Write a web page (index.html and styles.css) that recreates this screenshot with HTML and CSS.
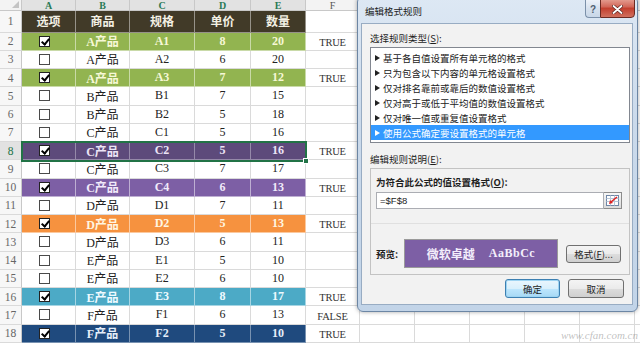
FILE: index.html
```html
<!DOCTYPE html>
<html lang="zh-CN">
<head>
<meta charset="utf-8">
<title>编辑格式规则</title>
<link rel="stylesheet" href="styles.css">
</head>
<body>
<div class="screen">
  <div class="sheet">
    <div class="row head">
      <div class="corner"></div>
      <div class="colh sel">A</div>
      <div class="colh sel">B</div>
      <div class="colh sel">C</div>
      <div class="colh sel">D</div>
      <div class="colh sel">E</div>
      <div class="colh">F</div>
      <div class="colh rest"></div>
    </div>
    <div class="row hdr">
      <div class="rh">1</div>
      <div class="c">选项</div><div class="c">商品</div><div class="c">规格</div><div class="c">单价</div><div class="c">数量</div>
      <div class="f"></div><div class="r"></div>
    </div>
    <div class="row g">
      <div class="rh">2</div>
      <div class="c a"><span class="cb on"></span></div><div class="c">A产品</div><div class="c">A1</div><div class="c">8</div><div class="c">20</div>
      <div class="f">TRUE</div><div class="r"></div>
    </div>
    <div class="row">
      <div class="rh">3</div>
      <div class="c a"><span class="cb"></span></div><div class="c">A产品</div><div class="c">A2</div><div class="c">6</div><div class="c">20</div>
      <div class="f"></div><div class="r"></div>
    </div>
    <div class="row g">
      <div class="rh">4</div>
      <div class="c a"><span class="cb on"></span></div><div class="c">A产品</div><div class="c">A3</div><div class="c">7</div><div class="c">12</div>
      <div class="f">TRUE</div><div class="r"></div>
    </div>
    <div class="row">
      <div class="rh">5</div>
      <div class="c a"><span class="cb"></span></div><div class="c">B产品</div><div class="c">B1</div><div class="c">7</div><div class="c">15</div>
      <div class="f"></div><div class="r"></div>
    </div>
    <div class="row">
      <div class="rh">6</div>
      <div class="c a"><span class="cb"></span></div><div class="c">B产品</div><div class="c">B2</div><div class="c">5</div><div class="c">18</div>
      <div class="f"></div><div class="r"></div>
    </div>
    <div class="row">
      <div class="rh">7</div>
      <div class="c a"><span class="cb"></span></div><div class="c">C产品</div><div class="c">C1</div><div class="c">5</div><div class="c">16</div>
      <div class="f"></div><div class="r"></div>
    </div>
    <div class="row pd">
      <div class="rh sel">8</div>
      <div class="c a"><span class="cb on"></span></div><div class="c">C产品</div><div class="c">C2</div><div class="c">5</div><div class="c">16</div>
      <div class="f">TRUE</div><div class="r"></div>
    </div>
    <div class="row">
      <div class="rh">9</div>
      <div class="c a"><span class="cb"></span></div><div class="c">C产品</div><div class="c">C3</div><div class="c">7</div><div class="c">17</div>
      <div class="f"></div><div class="r"></div>
    </div>
    <div class="row p">
      <div class="rh">10</div>
      <div class="c a"><span class="cb on"></span></div><div class="c">C产品</div><div class="c">C4</div><div class="c">6</div><div class="c">13</div>
      <div class="f">TRUE</div><div class="r"></div>
    </div>
    <div class="row">
      <div class="rh">11</div>
      <div class="c a"><span class="cb"></span></div><div class="c">D产品</div><div class="c">D1</div><div class="c">7</div><div class="c">11</div>
      <div class="f"></div><div class="r"></div>
    </div>
    <div class="row o">
      <div class="rh">12</div>
      <div class="c a"><span class="cb on"></span></div><div class="c">D产品</div><div class="c">D2</div><div class="c">5</div><div class="c">13</div>
      <div class="f">TRUE</div><div class="r"></div>
    </div>
    <div class="row">
      <div class="rh">13</div>
      <div class="c a"><span class="cb"></span></div><div class="c">D产品</div><div class="c">D3</div><div class="c">6</div><div class="c">11</div>
      <div class="f"></div><div class="r"></div>
    </div>
    <div class="row">
      <div class="rh">14</div>
      <div class="c a"><span class="cb"></span></div><div class="c">E产品</div><div class="c">E1</div><div class="c">5</div><div class="c">10</div>
      <div class="f"></div><div class="r"></div>
    </div>
    <div class="row">
      <div class="rh">15</div>
      <div class="c a"><span class="cb"></span></div><div class="c">E产品</div><div class="c">E2</div><div class="c">6</div><div class="c">10</div>
      <div class="f"></div><div class="r"></div>
    </div>
    <div class="row t">
      <div class="rh">16</div>
      <div class="c a"><span class="cb on"></span></div><div class="c">E产品</div><div class="c">E3</div><div class="c">8</div><div class="c">17</div>
      <div class="f">TRUE</div><div class="r"></div>
    </div>
    <div class="row">
      <div class="rh">17</div>
      <div class="c a"><span class="cb"></span></div><div class="c">F产品</div><div class="c">F1</div><div class="c">6</div><div class="c">13</div>
      <div class="f">FALSE</div><div class="r"></div>
    </div>
    <div class="row b">
      <div class="rh">18</div>
      <div class="c a"><span class="cb on"></span></div><div class="c">F产品</div><div class="c">F2</div><div class="c">5</div><div class="c">10</div>
      <div class="f">TRUE</div><div class="r"></div>
    </div>
  </div>

  <div class="selbox"></div>
  <div class="handle"></div>

  <div class="dialog">
    <div class="titlebar">
      <span class="title">编辑格式规则</span>
      <div class="caps">
        <span class="cap help">?</span>
        <span class="cap close"><svg width="11" height="9" viewBox="0 0 11 9"><path d="M1.5 1 L9.5 8 M9.5 1 L1.5 8" stroke="#5a2420" stroke-width="3.2" stroke-linecap="round"/><path d="M1.5 1 L9.5 8 M9.5 1 L1.5 8" stroke="#fff" stroke-width="1.8" stroke-linecap="round"/></svg></span>
      </div>
    </div>
    <div class="client">
      <div class="lbl">选择规则类型(<u>S</u>):</div>
      <ul class="list">
        <li><span class="tri"></span>基于各自值设置所有单元格的格式</li>
        <li><span class="tri"></span>只为包含以下内容的单元格设置格式</li>
        <li><span class="tri"></span>仅对排名靠前或靠后的数值设置格式</li>
        <li><span class="tri"></span>仅对高于或低于平均值的数值设置格式</li>
        <li><span class="tri"></span>仅对唯一值或重复值设置格式</li>
        <li class="on"><span class="tri"></span>使用公式确定要设置格式的单元格</li>
      </ul>
      <div class="lbl lbl2">编辑规则说明(<u>E</u>):</div>
      <div class="group">
        <div class="lbl bold">为符合此公式的值设置格式(<u>O</u>):</div>
        <div class="inrow">
          <div class="input">=$F$8</div>
          <span class="refbtn"><svg width="13" height="11" viewBox="0 0 13 11"><rect x="0.5" y="0.5" width="12" height="10" fill="#fff" stroke="#6f86a6"/><path d="M0.5 3.5 H12.5 M0.5 6.5 H12.5 M4.5 0.5 V10.5 M8.5 0.5 V10.5" stroke="#b9c7d9" stroke-width="1"/><path d="M11 2 L5 7" stroke="#d22" stroke-width="1.6"/><path d="M3 9 L4 5 L7 8 Z" fill="#d22"/></svg></span>
        </div>
        <div class="sep"></div>
        <div class="prevrow">
          <span class="lbl bold plbl">预览:</span>
          <div class="preview"><span>微软卓越</span><span class="lat">AaBbCc</span></div>
          <span class="btn fmt">格式(<u>F</u>)...</span>
        </div>
      </div>
      <div class="actions">
        <span class="btn def">确定</span>
        <span class="btn">取消</span>
      </div>
    </div>
  </div>

  <div class="watermark">www.cfan.com.cn</div>
</div>
</body>
</html>
```

FILE: styles.css
```css
* { box-sizing: border-box; margin: 0; padding: 0; }
html, body { width: 640px; height: 343px; overflow: hidden; background: #fff; }
body { font-family: "Liberation Serif", "Noto Sans CJK SC", serif; }

.screen { position: relative; width: 640px; height: 343px; overflow: hidden; }

/* ---------- spreadsheet ---------- */
.sheet {
  display: grid;
  grid-template-columns: 22px 54px 54px 65px 56px 55px 54px 1fr;
  grid-template-rows: 11px 21.5px repeat(17, 18.25px);
  font-size: 12px;
  color: #222;
}
.row { display: contents; }
.row > div {
  display: flex;
  align-items: center;
  justify-content: center;
  border-right: 1px solid #dadada;
  border-bottom: 1px solid #dadada;
  white-space: nowrap;
  overflow: hidden;
}

.corner { background: #f3f3f3; position: relative; border-color: #c8c8c8 !important; }
.corner::after {
  content: "";
  position: absolute;
  right: 2px; bottom: 2px;
  border-left: 7px solid transparent;
  border-bottom: 7px solid #c4c4c4;
}
.colh {
  background: #f3f3f3;
  font-family: "Liberation Serif", serif;
  font-size: 10px;
  color: #555;
  border-color: #c8c8c8 !important;
}
.colh.sel { background: #e2e2e2; color: #2a7a56; font-weight: bold; }
.colh.rest { background: #f3f3f3 repeating-linear-gradient(to right, transparent 0 54px, #c8c8c8 54px 55px); border-right: 0 !important; }

.rh {
  background: #f7f7f7;
  font-family: "Liberation Serif", serif;
  font-size: 11.5px;
  color: #666;
  border-right-color: #c8c8c8 !important;
}
.rh.sel { background: #e2e2e2; color: #217346; }

.c.a { justify-content: flex-start; padding-left: 17px; }
.f {
  align-items: flex-end !important;
  padding-bottom: 2px;
  font-size: 10.5px;
  letter-spacing: -0.2px;
  color: #333;
}
.r {
  border-right: 0 !important;
  background: repeating-linear-gradient(to right, transparent 0 54px, #dadada 54px 55px);
}

/* checkbox */
.cb {
  position: relative;
  width: 11px; height: 11px;
  background: #fff;
  border: 1px solid #4a4a4a;
  display: block;
}
.cb.on { border-color: #222; }
.cb.on::after {
  content: "";
  position: absolute;
  left: 3px; top: 0px;
  width: 3px; height: 6px;
  border-right: 2px solid #000;
  border-bottom: 2px solid #000;
  transform: rotate(40deg);
}

/* row colours */
.hdr > .c { background: #413a28; color: #f3f0e4; font-weight: bold; border-color: rgba(255,255,255,0.45); }
.g > .c { background: #92b450; color: #f6f8d6; font-weight: bold; border-color: rgba(255,255,255,0.5); }
.p > .c { background: #7d5fa5; color: #f1eafa; font-weight: bold; border-color: rgba(255,255,255,0.5); }
.pd > .c { background: #5d4a7b; color: #ece4f6; font-weight: bold; border-color: rgba(255,255,255,0.35); }
.o > .c { background: #f6923f; color: #fff6e2; font-weight: bold; border-color: rgba(255,255,255,0.5); }
.t > .c { background: #4caac6; color: #eefaff; font-weight: bold; border-color: rgba(255,255,255,0.5); }
.b > .c { background: #1f4a7e; color: #e6eef9; font-weight: bold; border-color: rgba(255,255,255,0.4); }

/* selection of A8:E8 */
.selbox {
  position: absolute;
  left: 21px; top: 141px;
  width: 286px; height: 20.5px;
  border: 2px solid #217346;
  pointer-events: none;
}
.handle {
  position: absolute;
  left: 303px; top: 157.5px;
  width: 6px; height: 6px;
  background: #217346;
  border: 1px solid #fff;
}

/* ---------- dialog ---------- */
.dialog {
  position: absolute;
  left: 357px; top: -4px;
  width: 281px; height: 316px;
  display: flex;
  flex-direction: column;
  border: 1px solid #6c86a4;
  border-radius: 6px;
  background: linear-gradient(#dde8f4, #cbdaeb 40%, #c2d4e8);
  box-shadow: 0 0 4px rgba(0,0,0,0.35);
  font-family: "Noto Sans CJK SC", "Liberation Sans", sans-serif;
  font-size: 9.5px;
  color: #1e1e1e;
}
.titlebar {
  height: 26px;
  flex: none;
  display: flex;
  align-items: flex-start;
  justify-content: space-between;
}
.title { margin: 8px 0 0 7px; line-height: 12px; color: #222; }
.caps { display: flex; margin-right: 2px; }
.cap {
  height: 21px;
  display: flex;
  align-items: center;
  justify-content: center;
  padding-top: 4px;
}
.help {
  width: 15px;
  background: linear-gradient(#f1f5fb, #d6e1ee 55%, #c9d7e8);
  border: 1px solid #7b90a9;
  border-right: 0;
  border-radius: 0 0 0 4px;
  color: #4f5e70;
  font-family: "Liberation Sans", sans-serif;
  font-weight: bold;
  font-size: 10px;
}
.close {
  width: 35px;
  background: linear-gradient(#e8a89c, #d2685a 45%, #c3402f 55%, #d0705e);
  border: 1px solid #6b2a22;
  border-radius: 0 0 4px 0;
}

.client {
  flex: 1;
  margin: 0 4px 6px 3px;
  background: #f2f2f2;
  border: 1px solid #98acc3;
  padding: 8px 2px 0 8px;
  display: flex;
  flex-direction: column;
}
.lbl { line-height: 12px; white-space: nowrap; }
.bold { font-weight: bold; }
u { text-decoration: underline; }

.list {
  list-style: none;
  margin-top: 3px;
  height: 96px;
  background: #fff;
  border: 1px solid #828790;
  padding: 2px 0;
}
.list li {
  height: 15px;
  display: flex;
  align-items: center;
  padding-left: 4px;
  color: #222;
  white-space: nowrap;
}
.tri {
  width: 0; height: 0;
  border-left: 5px solid #222;
  border-top: 3px solid transparent;
  border-bottom: 3px solid transparent;
  margin-right: 3px;
}
.list li.on { background: #3399ff; color: #fff; }
.list li.on .tri { border-left-color: #fff; }

.lbl2 { margin-top: 10px; }

.group {
  margin-top: 3px;
  height: 107px;
  border: 1px solid #c3c3c3;
  padding: 7px 7px 0 5px;
  display: flex;
  flex-direction: column;
}
.inrow { margin-top: 4px; display: flex; height: 17px; }
.input {
  flex: 1;
  background: #fff;
  border: 1px solid #abadb3;
  font-family: "Liberation Sans", sans-serif;
  font-size: 9.5px;
  line-height: 15px;
  padding-left: 3px;
  color: #222;
}
.refbtn {
  width: 18px;
  display: flex;
  align-items: center;
  justify-content: center;
  background: linear-gradient(#f6f6f6, #dcdcdc);
  border: 1px solid #8c8c8c;
  border-left: 0;
}
.sep { margin: 14px -7px 0 -5px; height: 1px; background: #e0e0e0; }
.prevrow { margin-top: 15px; display: flex; align-items: center; height: 29px; }
.plbl { width: 28px; }
.preview {
  width: 154px;
  height: 29px;
  background: #7d5fa5;
  border: 1px solid #9a9a9a;
  display: flex;
  align-items: center;
  justify-content: center;
  gap: 14px;
  color: #f3eefb;
  font-weight: bold;
  font-size: 12px;
}
.preview .lat { font-family: "Liberation Serif", serif; font-size: 12px; letter-spacing: 0.5px; }

.btn {
  display: flex;
  align-items: center;
  justify-content: center;
  width: 56px;
  height: 19px;
  background: linear-gradient(#f4f4f4, #ebebeb 50%, #dddddd 51%, #cfcfcf);
  border: 1px solid #707070;
  border-radius: 3px;
  color: #1e1e1e;
  white-space: nowrap;
}
.fmt { margin-left: 8px; width: 55px; height: 18px; }
.btn.def {
  border-color: #3c7fb1;
  background: linear-gradient(#eaf6fd, #d9f0fc 50%, #bee6fd 51%, #a7d9f5);
  box-shadow: inset 0 0 0 1px #9ed4f2;
  width: 55px;
}
.actions {
  margin-top: 4px;
  display: flex;
  justify-content: flex-end;
  gap: 8px;
  padding-right: 6px;
}

.watermark {
  position: absolute;
  right: 2px; bottom: 2px;
  font-family: "Liberation Serif", serif;
  font-style: italic;
  font-size: 11px;
  color: rgba(140,140,140,0.55);
}
```
